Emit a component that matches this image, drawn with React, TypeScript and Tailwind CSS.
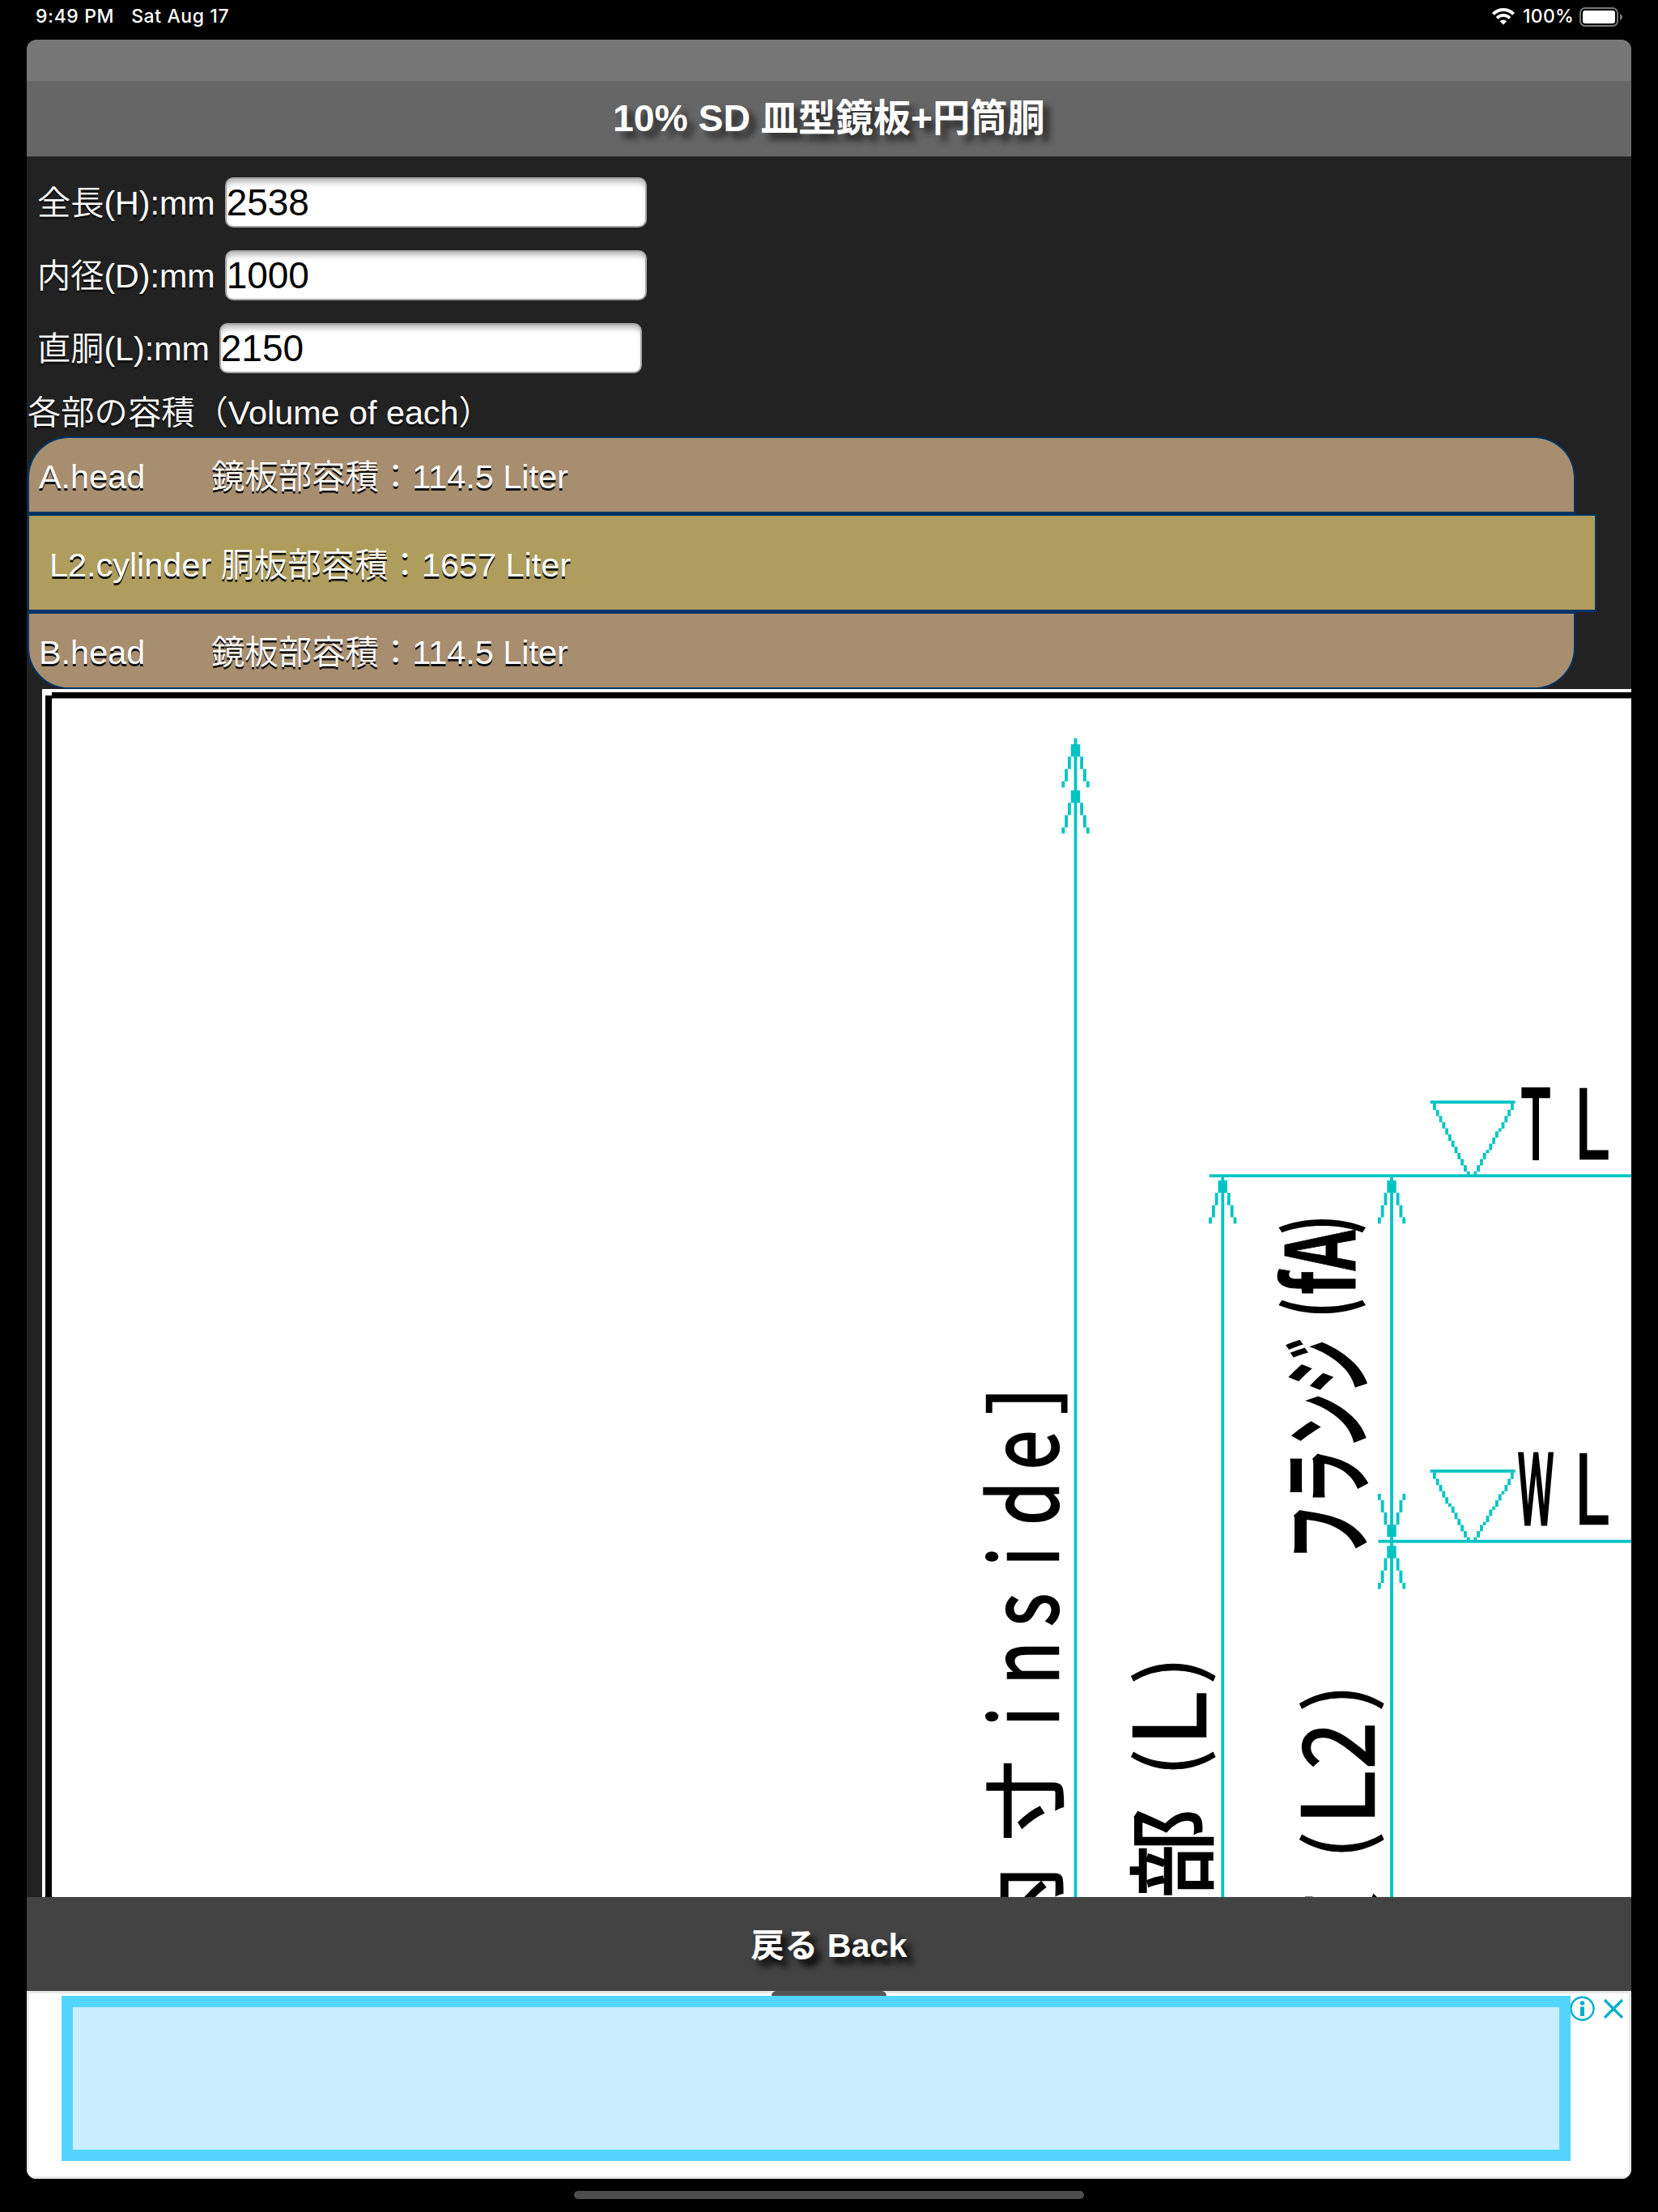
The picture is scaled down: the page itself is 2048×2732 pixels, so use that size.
const TEAL = '#00c4c4';
const UNIT = 3.8;

const StatusBar = () => {
  return (
    <div className="flex h-[49px] items-start justify-between pl-[44px] pr-[44px] pt-[5px] font-['Inter',sans-serif] text-[23px] font-medium leading-[31px] text-white">
      <div className="flex gap-[21px]">
        <span className="tracking-[0.6px]">9:49 PM</span>
        <span className="tracking-[0.6px]">Sat Aug 17</span>
      </div>
      <div className="flex items-center">
        <svg className="mr-[10px] h-[21px] w-[28px]" viewBox="0 0 28 21" fill="none">
          <path d="M1.4 7.4A17.6 17.6 0 0 1 26.6 7.4" stroke="white" strokeWidth="4" />
          <path d="M6 12.3A11.2 11.2 0 0 1 22 12.3" stroke="white" strokeWidth="3.8" />
          <path d="M14 20.6L9.6 16.2A6.4 6.4 0 0 1 18.4 16.2Z" fill="white" />
        </svg>
        <span className="mr-[7px] tracking-[0.2px]">100%</span>
        <svg className="h-[24px] w-[53px]" viewBox="0 0 53 24">
          <rect x="1" y="1" width="46" height="22" rx="6" fill="none" stroke="#777" strokeWidth="2" />
          <rect x="4" y="4" width="40" height="16" rx="3" fill="white" />
          <path d="M50 8C54 9.500 54 14.500 50 16Z" fill="#777" />
        </svg>
      </div>
    </div>
  );
};

const Field = ({ label, value, width }: { label: string; value: string; width: string }) => {
  return (
    <div className="flex h-[62px] items-center">
      <label className="mr-[12px] whitespace-pre pt-[2px] text-[41.2px] font-[350] leading-[60px] [text-shadow:0_2.5px_0_#111]">{label}</label>
      <input
        className={`${width} h-[62px] rounded-[10px] border-2 border-[#a5a5a5] bg-white text-[46px] leading-[58px] text-black shadow-[inset_0_7px_7px_-3px_#b5b5b5] outline-none`}
        defaultValue={value}
      />
    </div>
  );
};

// Dimension arrow head, drawn on the coarse pixel grid of the drawing
const Arrow = ({ x, y, down = false }: { x: number; y: number; down?: boolean }) => {
  return (
    <path
      transform={`translate(${x} ${y}) scale(${UNIT} ${down ? -UNIT : UNIT})`}
      fill={TEAL}
      d="M-1.5 0h3v4h-3zM-2.500 4h1v4h-1zM-3.500 8h1v4h-1zM-4.500 12h1v2h-1zM1.500 4h1v4h-1zM2.500 8h1v4h-1zM3.500 12h1v2h-1z"
    />
  );
};

const LevelMark = ({ y, rows }: { y: number; rows: number }) => {
  const steps = Array.from({ length: rows }, (_, i) => i);
  return (
    <g fill={TEAL}>
      <rect x="1766.600" y={y} width="105" height={UNIT} />
      {steps.map((i) => {
        const left = 1770 + Math.floor((i * 12) / rows) * UNIT;
        const right = 1866 - Math.floor((i * 13) / rows) * UNIT;
        const top = y + UNIT + i * UNIT;
        return (
          <g key={i}>
            <rect x={left} y={top} width={UNIT} height={UNIT + 0.3} />
            <rect x={right} y={top} width={UNIT} height={UNIT + 0.3} />
          </g>
        );
      })}
    </g>
  );
};

const Drawing = () => {
  return (
    <svg
      className="ml-[19px] h-[1492px] w-[1963px] shrink-0 bg-white font-['Noto_Sans_CJK_JP',sans-serif]"
      viewBox="52 851 1963 1492"
    >
      {/* Sheet border */}
      <path d="M64 855H2015V862.500H64V2343H56V859H64Z" fill="black" />

      {/* Dimension lines */}
      <g fill={TEAL}>
        <rect x="1326.600" y="911.700" width={UNIT} height="1432" />
        <rect x="1508.400" y="1452" width={UNIT} height="892" />
        <rect x="1717.100" y="1452" width={UNIT} height="892" />
        <rect x="1493.900" y="1450.300" width="522" height={UNIT} />
        <rect x="1702.500" y="1901.800" width="313" height={UNIT} />
      </g>
      <Arrow x={1328.5} y={919.3} />
      <Arrow x={1328.5} y={976.3} />
      <Arrow x={1510.3} y={1458} />
      <Arrow x={1719} y={1458} />
      <Arrow x={1719} y={1898.3} down />
      <Arrow x={1719} y={1909.3} />
      <LevelMark y={1359.3} rows={23} />
      <LevelMark y={1815} rows={22} />

      <g fill="black" stroke="black" strokeWidth="2.500" textAnchor="middle">
        {/* Level labels */}
        <text transform="translate(1897 1431) scale(0.53 1)" fontSize="117" strokeWidth="4" x="0">T</text>
        <text transform="translate(1966 1431) scale(0.7 1)" fontSize="117" x="0">L</text>
        <text transform="translate(1897 1882) scale(0.43 1)" fontSize="117" strokeWidth="5" x="0">W</text>
        <text transform="translate(1966 1882) scale(0.7 1)" fontSize="117" x="0">L</text>

        {/* 内寸 inside] */}
        <text transform="translate(1307 2120) rotate(-90) scale(0.76 1)" fontSize="115" x="0 86.600 173.200 259.800 346.400 433">inside</text>
        <text transform="translate(1300 1730) rotate(-90)" fontSize="102" x="0">]</text>
        <text transform="translate(1304 2224) rotate(-90)" fontSize="100" x="-131 0">内寸</text>

        {/* 部 (L) */}
        <text transform="translate(1489 2120) rotate(-90) scale(1.04 1)" fontSize="121" x="-3">L</text>
        <text transform="translate(1481 2120) rotate(-90)" fontSize="102" strokeWidth="1" x="-57 57">()</text>
        <text transform="translate(1489 2289) rotate(-90)" fontSize="110" x="0">部</text>

        {/* 板 (L2) */}
        <text transform="translate(1697 2218) rotate(-90) scale(1.04 1)" fontSize="121" x="-3">L</text>
        <text transform="translate(1697 2156) rotate(-90) scale(0.86 1)" fontSize="121" x="0">2</text>
        <text transform="translate(1689 2219) rotate(-90)" fontSize="102" strokeWidth="1" x="-60 122">()</text>
        <text transform="translate(1695 2390) rotate(-90)" fontSize="104" x="0">板</text>

        {/* フランジ(fA) */}
        <text transform="translate(1683 1892) rotate(-90) scale(0.6 1)" fontSize="116" fontWeight="bold" strokeWidth="0" x="0 114 228 342">フランジ</text>
        <text transform="translate(1674 1615) rotate(-90) scale(0.66 1)" fontSize="118" fontWeight="bold" strokeWidth="1" x="46 107">fA</text>
        <text transform="translate(1666 1615) rotate(-90) scale(0.65 1)" fontSize="104" fontWeight="bold" strokeWidth="0" x="0 157">()</text>
      </g>
    </svg>
  );
};

const AdBanner = () => {
  return (
    <div className="flex h-[232px] flex-col border-[3px] border-[#e8e8e8] bg-white">
      <div className="-mt-[3px] ml-[917px] h-[6px] w-[142px] shrink-0 rounded-t-lg bg-[#555]"></div>
      <div className="ml-[40px] flex">
        <div className="h-[204px] w-[1864px] border-[14px] border-[#53d5ff] bg-[#c8eeff]"></div>
        <svg className="h-[32px] w-[70px]" viewBox="0 0 70 32" fill="none" stroke="#00aecd">
          <circle cx="14.500" cy="15.800" r="14" strokeWidth="2.400" />
          <circle cx="14.500" cy="9" r="2.800" fill="#00aecd" stroke="none" />
          <path d="M14.500 13.500V25" strokeWidth="5" />
          <path d="M42 5L64 27M64 5L42 27" strokeWidth="3.200" />
        </svg>
      </div>
    </div>
  );
};

export default function App() {
  return (
    <div className="h-[2732px] w-[2048px] overflow-hidden bg-black font-['Liberation_Sans','Noto_Sans_CJK_JP',sans-serif] text-white">
      <StatusBar />
      <div className="mx-[33px] flex h-[2642px] flex-col overflow-hidden rounded-[12px] bg-[#222]">
        <div className="h-[51px] shrink-0 bg-[#777]"></div>
        <h1 className="h-[94px] shrink-0 border-b border-[#333] bg-[#666] text-center text-[46.3px] font-bold leading-[92px] [text-shadow:8px_8px_8px_rgba(0,0,0,0.65)]">
          10% SD 皿型鏡板+円筒胴
        </h1>

        {/* Inputs */}
        <div className="flex shrink-0 flex-col gap-[28px] pl-[13px] pt-[25px]">
          <Field label="全長(H):mm" value="2538" width="w-[521px]" />
          <Field label="内径(D):mm" value="1000" width="w-[521px]" />
          <Field label="直胴(L):mm" value="2150" width="w-[522px]" />
        </div>

        {/* Volumes */}
        <p className="mt-[17px] h-[61px] shrink-0 pl-px text-[41.3px] font-[350] leading-[64px] [text-shadow:0_2.5px_0_#111]">
          各部の容積（Volume of each）
        </p>
        <div className="ml-px shrink-0 text-[41.4px] font-[350] [text-shadow:0_2.5px_0_#111]">
          <div className="flex h-[96px] w-[1912px] rounded-t-[51px] border-2 border-b-[3px] border-[#036] bg-[#a78e6f] pl-[12px] pt-[7px] leading-[83px]">
            <span className="w-[213px]">A.head</span>
            <span>鏡板部容積：114.5 Liter</span>
          </div>
          <div className="h-[121px] w-[1938px] border-2 border-b-[3px] border-[#036] bg-[#ae9d5d] pl-[25px] pt-[6px] leading-[110px]">
            L2.cylinder 胴板部容積：1657 Liter
          </div>
          <div className="flex h-[95px] w-[1912px] rounded-b-[51px] border-2 border-[#036] bg-[#a78e6f] pl-[12px] pt-[5px] leading-[86px]">
            <span className="w-[213px]">B.head</span>
            <span>鏡板部容積：114.5 Liter</span>
          </div>
        </div>

        <Drawing />

        <button className="block h-[116px] w-full shrink-0 bg-[#434343] text-center text-[41.3px] font-bold leading-[120px] [text-shadow:8px_8px_8px_black]">
          戻る Back
        </button>
        <AdBanner />
      </div>
      <div className="mx-auto mt-[15px] h-[10px] w-[630px] rounded-full bg-[#4d4d4d]"></div>
    </div>
  );
}
